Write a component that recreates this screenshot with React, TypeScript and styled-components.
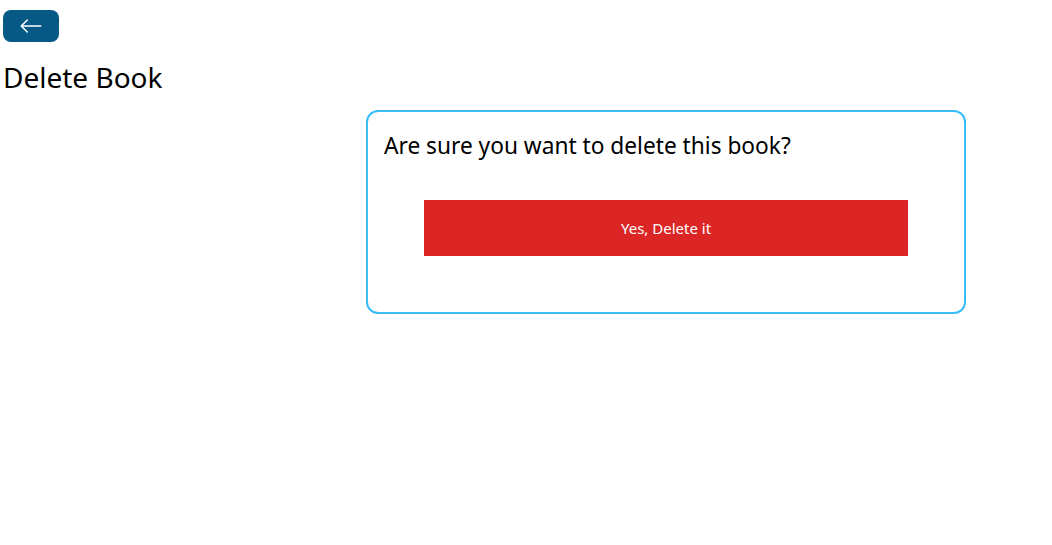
import React from "react";
import styled, { createGlobalStyle } from "styled-components";
import { BsArrowLeft } from "react-icons/bs";

const Global = createGlobalStyle`
  html, body { margin: 0; padding: 0; background: #fff; }
  body { font-family: "Segoe UI", "Noto Sans", "Open Sans", sans-serif; color: #000; }
  * { box-sizing: border-box; }
`;

const Page = styled.div`
  padding: 10px 3px;
`;

const BackButton = styled.button`
  display: inline-flex;
  align-items: center;
  justify-content: center;
  width: 56px;
  height: 32px;
  padding: 4px 16px;
  border: none;
  border-radius: 8px;
  background: #075985;
  color: #fff;
  font-size: 24px;
  cursor: pointer;
`;

const Title = styled.h1`
  margin: 16px 0 15px;
  font-size: 28px;
  line-height: 36px;
  font-weight: 400;
`;

const Card = styled.div`
  display: flex;
  flex-direction: column;
  align-items: center;
  width: 600px;
  margin-left: 363px;
  padding: 16px;
  border: 2px solid #38bdf8;
  border-radius: 12px;
`;

const Question = styled.h3`
  align-self: stretch;
  margin: 0;
  padding-top: 2px;
  font-size: 22.7px;
  line-height: 32px;
  font-weight: 400;
`;

const DeleteButton = styled.button`
  align-self: stretch;
  margin: 38px 40px 40px;
  padding: 16px;
  border: none;
  background: #dc2626;
  color: #fff;
  font-family: inherit;
  font-size: 15px;
  line-height: 24px;
  cursor: pointer;
`;

export default function App() {
  return (
    <>
      <Global />
      <Page>
        <BackButton aria-label="Back">
          <BsArrowLeft />
        </BackButton>
        <Title>Delete Book</Title>
        <Card>
          <Question>Are sure you want to delete this book?</Question>
          <DeleteButton>Yes, Delete it</DeleteButton>
        </Card>
      </Page>
    </>
  );
}
